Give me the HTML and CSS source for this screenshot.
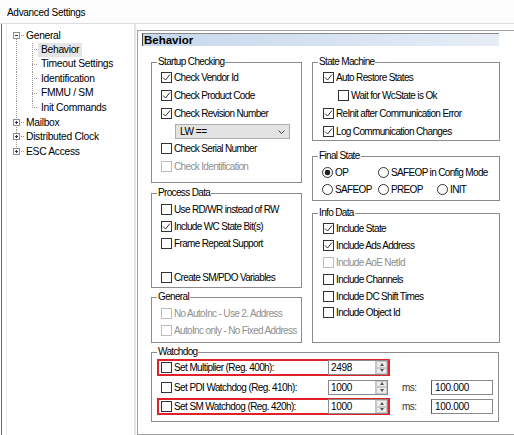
FILE: index.html
```html
<!DOCTYPE html>
<html>
<head>
<meta charset="utf-8">
<title>Advanced Settings</title>
<link rel="stylesheet" href="styles.css">
</head>
<body>
<div class="title">Advanced Settings</div>
<div class="main">
  <div class="tree">
    <div class="node root first"><span class="g"><span class="exp"></span></span><span class="h"></span><span class="lbl">General</span></div>
    <div class="node child"><span class="g"></span><span class="g2"></span><span class="lbl sel">Behavior</span></div>
    <div class="node child"><span class="g"></span><span class="g2"></span><span class="lbl">Timeout Settings</span></div>
    <div class="node child"><span class="g"></span><span class="g2"></span><span class="lbl">Identification</span></div>
    <div class="node child"><span class="g"></span><span class="g2"></span><span class="lbl">FMMU / SM</span></div>
    <div class="node child"><span class="g"></span><span class="g2 end"></span><span class="lbl">Init Commands</span></div>
    <div class="node root"><span class="g"><span class="exp plus"></span></span><span class="h"></span><span class="lbl">Mailbox</span></div>
    <div class="node root"><span class="g"><span class="exp plus"></span></span><span class="h"></span><span class="lbl">Distributed Clock</span></div>
    <div class="node root last"><span class="g"><span class="exp plus"></span></span><span class="h"></span><span class="lbl">ESC Access</span></div>
  </div>
  <div class="content">
    <div class="hdr">Behavior</div>
    <div class="cols">
      <div class="col l">
        <fieldset class="grp startup">
          <legend>Startup Checking</legend>
          <div class="body">
            <div class="row"><span class="cb"><svg viewBox="0 0 9 9"><path d="M1 4.5L3.5 7L8 1.5"/></svg></span><span class="t">Check Vendor Id</span></div>
            <div class="row"><span class="cb"><svg viewBox="0 0 9 9"><path d="M1 4.5L3.5 7L8 1.5"/></svg></span><span class="t">Check Product Code</span></div>
            <div class="row"><span class="cb"><svg viewBox="0 0 9 9"><path d="M1 4.5L3.5 7L8 1.5"/></svg></span><span class="t">Check Revision Number</span></div>
            <div class="dd"><span class="ddv">LW ==</span><svg class="chev" viewBox="0 0 7 4"><path d="M0.5 0.5L3.5 3.5L6.5 0.5"/></svg></div>
            <div class="row"><span class="cb"></span><span class="t">Check Serial Number</span></div>
            <div class="row dis"><span class="cb"></span><span class="t">Check Identification</span></div>
          </div>
        </fieldset>
        <fieldset class="grp process">
          <legend>Process Data</legend>
          <div class="body">
            <div class="row r17"><span class="cb"></span><span class="t">Use RD/WR instead of RW</span></div>
            <div class="row r17"><span class="cb"><svg viewBox="0 0 9 9"><path d="M1 4.5L3.5 7L8 1.5"/></svg></span><span class="t">Include WC State Bit(s)</span></div>
            <div class="row r17"><span class="cb"></span><span class="t">Frame Repeat Support</span></div>
            <div class="row r17"></div>
            <div class="row r17"><span class="cb"></span><span class="t">Create SM/PDO Variables</span></div>
          </div>
        </fieldset>
        <fieldset class="grp general">
          <legend>General</legend>
          <div class="body">
            <div class="row r17 dis"><span class="cb"></span><span class="t">No AutoInc - Use 2. Address</span></div>
            <div class="row r17 dis"><span class="cb"></span><span class="t">AutoInc only - No Fixed Address</span></div>
          </div>
        </fieldset>
      </div>
      <div class="col r">
        <fieldset class="grp sm">
          <legend>State Machine</legend>
          <div class="body">
            <div class="row"><span class="cb"><svg viewBox="0 0 9 9"><path d="M1 4.5L3.5 7L8 1.5"/></svg></span><span class="t">Auto Restore States</span></div>
            <div class="row ind"><span class="cb"></span><span class="t">Wait for WcState is Ok</span></div>
            <div class="row"><span class="cb"><svg viewBox="0 0 9 9"><path d="M1 4.5L3.5 7L8 1.5"/></svg></span><span class="t">ReInit after Communication Error</span></div>
            <div class="row"><span class="cb"><svg viewBox="0 0 9 9"><path d="M1 4.5L3.5 7L8 1.5"/></svg></span><span class="t">Log Communication Changes</span></div>
          </div>
        </fieldset>
        <fieldset class="grp final">
          <legend>Final State</legend>
          <div class="body">
            <div class="row r17"><span class="ri w1"><span class="rb on"></span><span class="t">OP</span></span><span class="ri"><span class="rb"></span><span class="t">SAFEOP in Config Mode</span></span></div>
            <div class="row r17"><span class="ri w1"><span class="rb"></span><span class="t">SAFEOP</span></span><span class="ri w2"><span class="rb"></span><span class="t">PREOP</span></span><span class="ri"><span class="rb"></span><span class="t">INIT</span></span></div>
          </div>
        </fieldset>
        <fieldset class="grp info">
          <legend>Info Data</legend>
          <div class="body">
            <div class="row ri17"><span class="cb"><svg viewBox="0 0 9 9"><path d="M1 4.5L3.5 7L8 1.5"/></svg></span><span class="t">Include State</span></div>
            <div class="row ri17"><span class="cb"><svg viewBox="0 0 9 9"><path d="M1 4.5L3.5 7L8 1.5"/></svg></span><span class="t">Include Ads Address</span></div>
            <div class="row ri17 dis"><span class="cb"></span><span class="t">Include AoE NetId</span></div>
            <div class="row ri17"><span class="cb"></span><span class="t">Include Channels</span></div>
            <div class="row ri17"><span class="cb"></span><span class="t">Include DC Shift Times</span></div>
            <div class="row ri17"><span class="cb"></span><span class="t">Include Object Id</span></div>
          </div>
        </fieldset>
      </div>
    </div>
    <fieldset class="grp watchdog">
      <legend>Watchdog</legend>
      <div class="body">
        <div class="wrow">
          <div class="wrap red"><span class="cb"></span><span class="t">Set Multiplier (Reg. 400h):</span><span class="spin"><span class="val">2498</span><span class="btns"><span class="up"></span><span class="dn"></span></span></span></div>
        </div>
        <div class="wrow">
          <div class="wrap"><span class="cb"></span><span class="t">Set PDI Watchdog (Reg. 410h):</span><span class="spin"><span class="val">1000</span><span class="btns"><span class="up"></span><span class="dn"></span></span></span></div>
          <span class="ms">ms:</span><span class="inp">100.000</span>
        </div>
        <div class="wrow">
          <div class="wrap red"><span class="cb"></span><span class="t">Set SM Watchdog (Reg. 420h):</span><span class="spin"><span class="val">1000</span><span class="btns"><span class="up"></span><span class="dn"></span></span></span></div>
          <span class="ms">ms:</span><span class="inp">100.000</span>
        </div>
      </div>
    </fieldset>
  </div>
</div>
</body>
</html>
```

FILE: styles.css
```css
* { box-sizing: border-box; }
html, body { margin: 0; padding: 0; }
body {
  width: 514px;
  height: 435px;
  overflow: hidden;
  background: #fff;
  font-family: "Liberation Sans", Arial, sans-serif;
  color: #000;
}

.title {
  height: 24px;
  padding: 7px 0 0 7px;
  font-size: 10px;
  line-height: 12px;
  letter-spacing: -0.3px;
  color: #000;
  background: #fcfcfc;
  border-bottom: 1px solid #dcdcdc;
}

.main {
  display: flex;
  height: 411px;
}

/* ---------- tree ---------- */
.tree {
  width: 135px;
  margin-left: 1px;
  padding-top: 4px;
  border-left: 1px solid #6b6b6b;
  border-right: 2px solid #e6e6e6;
  box-shadow: inset 4px 0 0 #fff, inset 5px 0 0 #e9e9e9;
  font-size: 10.3px;
  letter-spacing: -0.3px;
  color: #000;
}
.node {
  display: flex;
  align-items: center;
  height: 14.5px;
  white-space: nowrap;
}
.g {
  flex: none;
  width: 9px;
  height: 100%;
  margin-left: 10px;
  display: flex;
  align-items: center;
  justify-content: center;
  background: repeating-linear-gradient(to bottom, #9a9a9a 0 1px, transparent 1px 2px) no-repeat 4px 0 / 1px 100%;
}
.node.first .g { background-position: 4px 100%; background-size: 1px 50%; }
.node.last .g { background-position: 4px 0; background-size: 1px 50%; }
.exp {
  width: 7px;
  height: 7px;
  margin-left: -1px;
  border: 1px solid #8e8e8e;
  background: linear-gradient(#333, #333) no-repeat center / 3px 1px, #fff;
}
.exp.plus {
  background: linear-gradient(#333, #333) no-repeat center / 3px 1px,
              linear-gradient(#333, #333) no-repeat center / 1px 3px, #fff;
}
.h {
  flex: none;
  width: 4px;
  height: 100%;
  background: repeating-linear-gradient(to right, #9a9a9a 0 1px, transparent 1px 2px) no-repeat 0 50% / 4px 1px;
}
.root .lbl { margin-left: 1px; }
.g2 {
  flex: none;
  width: 10px;
  height: 100%;
  margin-left: 7px;
  background:
    repeating-linear-gradient(to bottom, #9a9a9a 0 1px, transparent 1px 2px) no-repeat 4px 0 / 1px 100%,
    repeating-linear-gradient(to right, #9a9a9a 0 1px, transparent 1px 2px) no-repeat 4px 50% / 6px 1px;
}
.g2.end {
  background:
    repeating-linear-gradient(to bottom, #9a9a9a 0 1px, transparent 1px 2px) no-repeat 4px 0 / 1px 50%,
    repeating-linear-gradient(to right, #9a9a9a 0 1px, transparent 1px 2px) no-repeat 4px 50% / 6px 1px;
}
.child .lbl {
  padding: 0 3px;
  line-height: 14px;
}
.lbl.sel { background: #e5e5e5; }

/* ---------- content ---------- */
.content {
  flex: 1;
  margin-left: 1px;
  margin-top: 6px;
  padding: 2px 0 0 4px;
  border-left: 1px solid #a0a0a0;
  border-top: 1px solid #a0a0a0;
  border-bottom: 1px solid #a0a0a0;
}
.hdr {
  width: 357px;
  height: 13px;
  padding-left: 1px;
  border-top: 1px solid #8a8a8a;
  border-left: 1px solid #404040;
  background: linear-gradient(to right, #c7d7ec, #e6edf6);
  font-weight: bold;
  font-size: 11.5px;
  line-height: 12px;
  color: #000;
}
.cols {
  display: flex;
  gap: 10px;
  margin: 11px 0 0 9px;
}
.col { display: flex; flex-direction: column; }
.col.l { width: 151px; }
.col.r { width: 188px; }

fieldset.grp {
  margin: 0;
  padding: 0;
  min-width: 0;
  border: 1px solid #8c8c8c;
}
.grp legend {
  padding: 0 1px;
  margin-left: 5px;
  font-size: 10px;
  line-height: 10px;
  letter-spacing: -0.65px;
  color: #000;
}
.startup { height: 126px; }
.startup .body { padding: 1px 0 0 9px; }
.process { height: 100px; margin-top: 5px !important; }
.process .body { padding: 2.5px 0 0 9px; }
.general { height: 51px; margin-top: 4px !important; }
.general .body { padding: 2.5px 0 0 9px; }
.sm { height: 84px; }
.sm .body { padding: 1px 0 0 10px; }
.final { height: 50px; margin-top: 10px !important; }
.final .body { padding: 2.5px 0 0 9px; }
.info { height: 135px; margin-top: 7px !important; }
.info .body { padding: 2.5px 0 0 10px; }

.row {
  display: flex;
  align-items: center;
  height: 18px;
  font-size: 10px;
  letter-spacing: -0.65px;
  white-space: nowrap;
}
.row.r17 { height: 17px; }
.row.ri17 { height: 16.8px; }
.row.ind { padding-left: 15px; }
.t { margin-left: 2px; }
.dis { color: #8f8f8f; }

.cb {
  flex: none;
  width: 11px;
  height: 11px;
  border: 1px solid #333;
  background: #fff;
  display: flex;
  align-items: center;
  justify-content: center;
}
.dis .cb { border-color: #bcbcbc; }
.cb svg {
  width: 9px;
  height: 9px;
  fill: none;
  stroke: #333;
  stroke-width: 1;
}

.ri { display: flex; align-items: center; }
.ri.w1 { width: 56px; }
.ri.w2 { width: 59px; }
.rb {
  flex: none;
  width: 11px;
  height: 11px;
  border: 1px solid #333;
  border-radius: 50%;
  background: #fff;
}
.rb.on { background: radial-gradient(circle, #222 0 2.6px, #fff 3.1px); }

.dd {
  display: flex;
  align-items: center;
  justify-content: space-between;
  width: 115px;
  height: 15px;
  margin: 2px 0 0 14px;
  padding: 0 4px 0 4px;
  border: 1px solid #adadad;
  background: #e3e3e3;
  font-size: 10px;
  letter-spacing: -0.4px;
  color: #000;
}
.chev {
  width: 7px;
  height: 4px;
  fill: none;
  stroke: #444;
  stroke-width: 1;
}

/* ---------- watchdog ---------- */
.watchdog {
  width: 348px;
  height: 75px;
  margin: 4px 0 0 9px !important;
}
.watchdog .body {
  padding: 2px 0 0 5px;
  display: flex;
  flex-direction: column;
  gap: 2.5px;
}
.wrow {
  display: flex;
  align-items: center;
  height: 17px;
  font-size: 10px;
  letter-spacing: -0.6px;
  white-space: nowrap;
}
.wrap {
  display: flex;
  align-items: center;
  width: 233px;
  height: 17px;
  padding-left: 2px;
  border: 2px solid transparent;
}
.wrap.red { border-color: #e2202a; }
.wrap .t { flex: 1; }
.spin {
  flex: none;
  display: flex;
  width: 60px;
  height: 15px;
  border: 1px solid #8a8a8a;
  background: #fff;
  letter-spacing: -0.3px;
}
.val {
  flex: 1;
  padding-left: 2px;
  line-height: 13px;
}
.btns {
  width: 12px;
  display: flex;
  flex-direction: column;
  border-left: 1px solid #c4c4c4;
}
.up, .dn {
  flex: 1;
  display: flex;
  align-items: center;
  justify-content: center;
  background: #ececec;
  border: 1px solid #c8c8c8;
}
.up::before {
  content: "";
  border-left: 2.5px solid transparent;
  border-right: 2.5px solid transparent;
  border-bottom: 3px solid #555;
}
.dn::before {
  content: "";
  border-left: 2.5px solid transparent;
  border-right: 2.5px solid transparent;
  border-top: 3px solid #555;
}
.ms {
  width: 29px;
  margin-left: 12px;
  color: #333;
}
.inp {
  width: 62px;
  height: 15px;
  padding-left: 3px;
  line-height: 13px;
  border: 1px solid #8a8a8a;
  border-left-color: #555;
  letter-spacing: -0.3px;
}
```
